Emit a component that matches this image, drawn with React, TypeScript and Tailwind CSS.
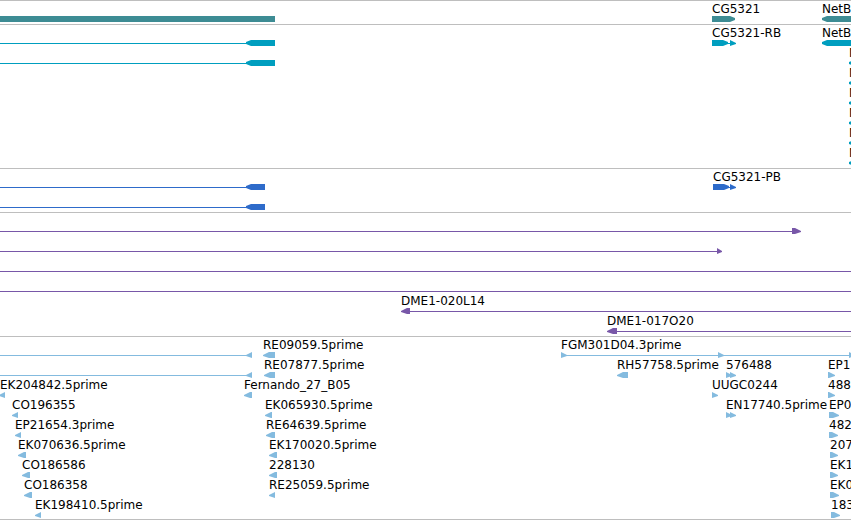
import React from 'react';

type Shape = 'line' | 'bar' | 'left' | 'right';

interface Feature {
  shape: Shape;
  start: number;
  // no end: the feature runs on past the right edge of the view
  end?: number;
}

interface Label {
  text: string;
  x: number;
}

interface Row {
  labels?: Label[];
  features: Feature[];
}

interface Track {
  id: string;
  name: string;
  color: string;
  rows: Row[];
}

const line = (start: number, end?: number): Feature => ({ shape: 'line', start, end });
const bar = (start: number, end?: number): Feature => ({ shape: 'bar', start, end });
const left = (start: number, end?: number): Feature => ({ shape: 'left', start, end });
const right = (start: number, end?: number): Feature => ({ shape: 'right', start, end });

const clippedTranscript: Row = {
  labels: [{ text: 'N', x: 849 }],
  features: [left(849)],
};

const tracks: Track[] = [
  {
    id: 'genes',
    name: 'Genes',
    color: 'fill-[#3d8c94]',
    rows: [
      {
        labels: [{ text: 'CG5321', x: 712 }, { text: 'NetB', x: 822 }],
        features: [bar(0, 275), right(712, 735), left(822)],
      },
    ],
  },
  {
    id: 'transcripts',
    name: 'Transcripts',
    color: 'fill-[#009ebf]',
    rows: [
      {
        labels: [{ text: 'CG5321-RB', x: 712 }, { text: 'NetB-', x: 822 }],
        features: [line(0, 250), left(246, 275), right(712, 728), line(726, 732), right(730, 736), left(822)],
      },
      {
        labels: clippedTranscript.labels,
        features: [line(0, 250), left(246, 275), ...clippedTranscript.features],
      },
      clippedTranscript,
      clippedTranscript,
      clippedTranscript,
      clippedTranscript,
      clippedTranscript,
    ],
  },
  {
    id: 'proteins',
    name: 'Proteins',
    color: 'fill-[#2e6bca]',
    rows: [
      {
        labels: [{ text: 'CG5321-PB', x: 713 }],
        features: [line(0, 250), left(246, 265), right(713, 729), line(727, 732), right(730, 736)],
      },
      { features: [line(0, 250), left(246, 265)] },
    ],
  },
  {
    id: 'clones',
    name: 'Clones',
    color: 'fill-[#7857a8]',
    rows: [
      { features: [line(0, 792), right(792, 801)] },
      { features: [line(0, 717), right(717, 722)] },
      { features: [line(0)] },
      { features: [line(0)] },
      {
        labels: [{ text: 'DME1-020L14', x: 401 }],
        features: [left(401, 410), line(410)],
      },
      {
        labels: [{ text: 'DME1-017O20', x: 607 }],
        features: [left(607, 617), line(617)],
      },
    ],
  },
  {
    id: 'ests',
    name: 'ESTs',
    color: 'fill-[#84bbdf]',
    rows: [
      {
        labels: [{ text: 'RE09059.5prime', x: 263 }, { text: 'FGM301D04.3prime', x: 561 }],
        features: [line(0, 248), left(246, 252), left(263, 275), right(561, 567), line(565), right(718, 724), right(849, 855)],
      },
      {
        labels: [
          { text: 'RE07877.5prime', x: 264 },
          { text: 'RH57758.5prime', x: 617 },
          { text: '576488', x: 726 },
          { text: 'EP1', x: 828 },
        ],
        features: [line(0, 248), left(246, 252), left(264, 275), left(617, 628), right(726, 732), right(730, 736), right(828, 835)],
      },
      {
        labels: [
          { text: 'EK204842.5prime', x: 0 },
          { text: 'Fernando_27_B05', x: 244 },
          { text: 'UUGC0244', x: 712 },
          { text: '488', x: 828 },
        ],
        features: [left(-1, 5), left(244, 252), right(712, 718), right(828, 835)],
      },
      {
        labels: [
          { text: 'CO196355', x: 12 },
          { text: 'EK065930.5prime', x: 265 },
          { text: 'EN17740.5prime', x: 726 },
          { text: 'EP0', x: 829 },
        ],
        features: [left(12, 18), left(265, 272), right(726, 732), right(730, 736), right(829, 839)],
      },
      {
        labels: [
          { text: 'EP21654.3prime', x: 15 },
          { text: 'RE64639.5prime', x: 266 },
          { text: '482', x: 829 },
        ],
        features: [left(15, 21), left(266, 275), right(829, 838)],
      },
      {
        labels: [
          { text: 'EK070636.5prime', x: 18 },
          { text: 'EK170020.5prime', x: 269 },
          { text: '207', x: 830 },
        ],
        features: [left(18, 26), left(269, 277), right(830, 838)],
      },
      {
        labels: [
          { text: 'CO186586', x: 22 },
          { text: '228130', x: 269 },
          { text: 'EK1', x: 830 },
        ],
        features: [left(22, 30), left(269, 277), right(830, 838)],
      },
      {
        labels: [
          { text: 'CO186358', x: 24 },
          { text: 'RE25059.5prime', x: 269 },
          { text: 'EK0', x: 830 },
        ],
        features: [left(24, 32), left(269, 275), right(830, 839)],
      },
      {
        labels: [{ text: 'EK198410.5prime', x: 35 }, { text: '183', x: 831 }],
        features: [left(35, 41), right(831, 840)],
      },
    ],
  },
];

const FeatureGlyph: React.FC<{ feature: Feature }> = ({ feature }) => {
  const { shape, start, end } = feature;
  const width = end === undefined ? '100%' : end - start;

  if (shape === 'line') {
    return <rect x={start} y={3} width={width} height={1} />;
  }
  if (shape === 'bar') {
    return <rect x={start} y={0} width={width} height={6} />;
  }

  const length = end === undefined ? Infinity : end - start;
  const taper = Math.min(length > 12 ? 5 : 6, length);
  // long features get a blunter tip
  const tipTop = length > 12 ? 2 : 3;

  if (shape === 'left') {
    return (
      <>
        <polygon points={`${start},${tipTop} ${start + taper},0 ${start + taper},6 ${start},4`} />
        {length > taper && (
          <rect x={start + taper} y={0} width={end === undefined ? '100%' : length - taper} height={6} />
        )}
      </>
    );
  }

  const tip = end ?? start + taper;
  return <polygon points={`${start},0 ${tip - taper},0 ${tip},${tipTop} ${tip},4 ${tip - taper},6 ${start},6`} />;
};

const TrackRow: React.FC<{ row: Row; color: string }> = ({ row, color }) => (
  <div>
    <div className="relative h-3.5">
      {row.labels?.map((label) => (
        <span key={label.x} className="absolute top-0 whitespace-nowrap" style={{ left: label.x }}>
          {label.text}
        </span>
      ))}
    </div>
    <svg className={`block h-1.5 w-full overflow-hidden ${color}`} aria-hidden="true">
      {row.features.map((feature, i) => (
        <FeatureGlyph key={i} feature={feature} />
      ))}
    </svg>
  </div>
);

const App: React.FC = () => {
  return (
    <main className="w-full overflow-hidden border-b border-[#bebebe] bg-white font-['DejaVu_Sans',sans-serif] text-[12px] leading-[14px] text-black">
      {tracks.map((track) => (
        <section
          key={track.id}
          aria-label={track.name}
          className="border-t border-[#bebebe] pt-px pb-0.5 last:pb-px"
        >
          {track.rows.map((row, i) => (
            <TrackRow key={i} row={row} color={track.color} />
          ))}
        </section>
      ))}
    </main>
  );
};

export default App;
